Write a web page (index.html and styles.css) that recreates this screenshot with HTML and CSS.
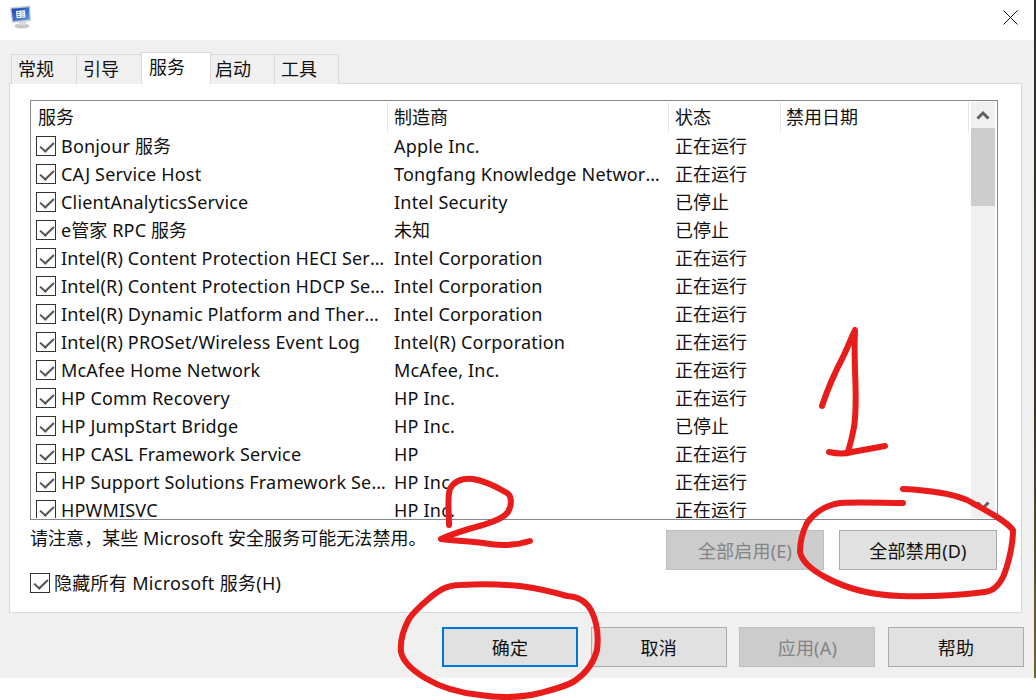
FILE: index.html
```html
<!DOCTYPE html>
<html lang="zh-CN">
<head>
<meta charset="utf-8">
<title>系统配置</title>
<link rel="stylesheet" href="styles.css">
</head>
<body>
<div class="screen">
  <main class="window">
    <header class="titlebar">
      <svg class="app-icon" width="24" height="24" viewBox="0 0 24 24">
        <defs>
          <linearGradient id="scr" x1="0" y1="0" x2="1" y2="1"><stop offset="0" stop-color="#1c3fb0"/><stop offset="1" stop-color="#5f9be8"/></linearGradient>
        </defs>
        <ellipse cx="13" cy="21" rx="7.5" ry="2.5" fill="#c4c8c8"/>
        <rect x="10" y="16" width="7" height="4" fill="#dcdfdf"/>
        <path d="M1 2.5 21 0.5 22 16 3 18Z" fill="#c9ced4"/>
        <path d="M2.5 3.8 20 2.2 20.6 14.6 4 16.2Z" fill="url(#scr)"/>
        <path d="M7 6 16 5.2 16.4 12.5 7.6 13.2Z" fill="#eef3fa"/>
        <path d="M8.5 7.5h2M8.5 9.5h2M8.700 11.5h2" stroke="#3a64c4" stroke-width="1"/>
        <path d="M12 7.2h3M12 9.2h3M12 11.2h3" stroke="#9fb4d8" stroke-width="1"/>
      </svg>
      <svg class="close-icon" width="15" height="15" viewBox="0 0 15 15"><path d="M.5.5l14 14M14.500.5l-14 14" stroke="#111" stroke-width="1" fill="none"/></svg>
    </header>
    <div class="client">
      <nav class="tabs">
        <span class="tab tab-a">常规</span>
        <span class="tab tab-a">引导</span>
        <span class="tab tab-selected">服务</span>
        <span class="tab tab-b">启动</span>
        <span class="tab tab-c">工具</span>
      </nav>
      <section class="panel">
        <div class="list">
          <div class="list-main">
            <div class="row head">
              <div class="cell c1 h">服务</div><div class="cell c2 h">制造商</div><div class="cell c3 h">状态</div><div class="cell c4 h">禁用日期</div>
            </div>
            <div class="row"><div class="cell c1"><i class="check"></i><span class="name">Bonjour <span class="cjk">服务</span></span></div><div class="cell c2">Apple Inc.</div><div class="cell c3">正在运行</div></div>
            <div class="row"><div class="cell c1"><i class="check"></i><span class="name">CAJ Service Host</span></div><div class="cell c2">Tongfang Knowledge Network Technology</div><div class="cell c3">正在运行</div></div>
            <div class="row"><div class="cell c1"><i class="check"></i><span class="name">ClientAnalyticsService</span></div><div class="cell c2">Intel Security</div><div class="cell c3">已停止</div></div>
            <div class="row"><div class="cell c1"><i class="check"></i><span class="name">e<span class="cjk">管家</span> RPC <span class="cjk">服务</span></span></div><div class="cell c2"><span class="cjk">未知</span></div><div class="cell c3">已停止</div></div>
            <div class="row"><div class="cell c1"><i class="check"></i><span class="name">Intel(R) Content Protection HECI Service</span></div><div class="cell c2">Intel Corporation</div><div class="cell c3">正在运行</div></div>
            <div class="row"><div class="cell c1"><i class="check"></i><span class="name">Intel(R) Content Protection HDCP Service</span></div><div class="cell c2">Intel Corporation</div><div class="cell c3">正在运行</div></div>
            <div class="row"><div class="cell c1"><i class="check"></i><span class="name">Intel(R) Dynamic Platform and Thermal Framework</span></div><div class="cell c2">Intel Corporation</div><div class="cell c3">正在运行</div></div>
            <div class="row"><div class="cell c1"><i class="check"></i><span class="name">Intel(R) PROSet/Wireless Event Log</span></div><div class="cell c2">Intel(R) Corporation</div><div class="cell c3">正在运行</div></div>
            <div class="row"><div class="cell c1"><i class="check"></i><span class="name">McAfee Home Network</span></div><div class="cell c2">McAfee, Inc.</div><div class="cell c3">正在运行</div></div>
            <div class="row"><div class="cell c1"><i class="check"></i><span class="name">HP Comm Recovery</span></div><div class="cell c2">HP Inc.</div><div class="cell c3">正在运行</div></div>
            <div class="row"><div class="cell c1"><i class="check"></i><span class="name">HP JumpStart Bridge</span></div><div class="cell c2">HP Inc.</div><div class="cell c3">已停止</div></div>
            <div class="row"><div class="cell c1"><i class="check"></i><span class="name">HP CASL Framework Service</span></div><div class="cell c2">HP</div><div class="cell c3">正在运行</div></div>
            <div class="row"><div class="cell c1"><i class="check"></i><span class="name">HP Support Solutions Framework Service</span></div><div class="cell c2">HP Inc.</div><div class="cell c3">正在运行</div></div>
            <div class="row"><div class="cell c1"><i class="check"></i><span class="name">HPWMISVC</span></div><div class="cell c2">HP Inc.</div><div class="cell c3">正在运行</div></div>
          </div>
          <div class="scrollbar">
            <svg class="arrow" width="24" height="26" viewBox="0 0 24 26"><path d="M6.500 16.500 12 11l5.500 5.500" stroke="#606060" stroke-width="3" fill="none"/></svg>
            <div class="thumb"></div>
            <svg class="arrow arrow-down" width="24" height="14" viewBox="0 0 24 14"><path d="M6.500 1.500 12 7l5.500-5.500" stroke="#606060" stroke-width="3" fill="none"/></svg>
          </div>
        </div>
        <div class="notice-row">
          <p class="notice">请注意，某些 Microsoft 安全服务可能无法禁用。</p>
          <div class="notice-buttons">
            <button class="btn btn-wide" disabled>全部启用(E)</button>
            <button class="btn btn-wide">全部禁用(D)</button>
          </div>
        </div>
        <label class="hide-row"><i class="check"></i><span>隐藏所有 Microsoft 服务(H)</span></label>
      </section>
      <footer class="footer">
        <button class="btn btn-default">确定</button>
        <button class="btn">取消</button>
        <button class="btn" disabled>应用(A)</button>
        <button class="btn">帮助</button>
      </footer>
    </div>
  </main>
  <div class="edge"></div>
</div>
<svg class="ink" width="1036" height="700" viewBox="0 0 1036 700">
  <g fill="none" stroke="#e91c1c" stroke-width="6" stroke-linecap="round" stroke-linejoin="round">
    <path d="M822 406C828 388 835 372 843 357C848 347 851 338 855 330C854 350 855 370 855.500 385C856 405 856 420 853 432C851 442 849 448 848 452"/>
    <path d="M829 452C838 454 845 454 852 452L885 446"/>
    <path d="M903 503C885 503 860 502 840 503C826 505 814 513 807 523C802 533 800 545 800 552C802 562 812 570 825 577C845 588 870 595 900 596C925 597 960 595 985 592C994 591 999 585 1003 577C1008 566 1013 545 1013 530C1005 520 985 510 967 500C950 493 925 490 903 489"/>
    <path d="M449 525C449 510 447 498 450 489C454 481 462 478 473 479C485 481 497 487 507 493C512 496 512 505 508 512C503 519 492 522 483 525C468 529 452 534 441 539C455 541 470 541 483 543C500 546 515 546 530 541"/>
    <path d="M567 596C550 591 535 588 520 586C500 584 480 584 460 585C447 585 440 590 432 596C424 603 415 610 409 619C403 630 400 642 401 652C403 662 412 670 425 678C440 687 460 693 480 695C500 698 520 698 540 693C555 689 568 686 576 680C587 672 594 662 597 650C599 635 596 620 591 610C586 602 580 597 567 596"/>
  </g>
</svg>
</body>
</html>
```
FILE: styles.css
```css
* { box-sizing: border-box; }
html, body { margin: 0; padding: 0; background: #fff; }
body {
  width: 1036px;
  height: 700px;
  overflow: hidden;
  position: relative;
  font-family: "Noto Sans", "Noto Sans CJK SC", sans-serif;
  font-size: 18px;
  color: #111;
}
.screen { display: flex; height: 678px; }
.window { width: 1034px; display: flex; flex-direction: column; }
.edge { width: 2px; background: linear-gradient(#2e2e2e, #3a3428 60%, #6e6436); }

.titlebar {
  height: 40px;
  background: #fff;
  display: flex;
  align-items: flex-start;
  justify-content: space-between;
  padding: 5px 16px 0 9px;
}
.close-icon { margin-top: 5px; }

.client { flex: 1; background: #f0f0f0; display: flex; flex-direction: column; }

.tabs { display: flex; align-items: flex-end; height: 44px; margin: 0 0 -1px 11px; }
.tab {
  position: relative;
  height: 30px;
  padding: 0 0 0 6px;
  line-height: 29px;
  background: #f0f0f0;
  border: 1px solid #d9d9d9;
  border-bottom: 0;
  border-right: 0;
}
.tab-a { width: 65px; }
.tab-b { width: 63px; border-left: 0; padding-left: 4px; }
.tab-c { width: 65px; border-right: 1px solid #d9d9d9; }
.tab-selected {
  z-index: 1;
  width: 70px;
  height: 32px;
  padding-left: 7px;
  line-height: 28px;
  background: #fff;
  border-right: 1px solid #d9d9d9;
}

.panel {
  height: 530px;
  margin: 0 12px 0 9px;
  padding: 16px 23px 0 20px;
  background: #fff;
  border: 1px solid #d9d9d9;
  display: flex;
  flex-direction: column;
}

.list {
  height: 420px;
  border: 1px solid #828790;
  padding: 1px 2px 1px 0;
  display: flex;
  background: #fff;
  overflow: hidden;
}
.list-main { flex: 1; min-width: 0; overflow: hidden; }
.row { display: flex; height: 28px; line-height: 28px; white-space: nowrap; }
.row.head { height: 30px; line-height: 30px; }
.cell { flex: none; overflow: hidden; text-overflow: ellipsis; }
.c1 { width: 357px; display: flex; align-items: center; padding: 0 1px 0 5px; }
.c2 { width: 281px; padding: 0 8px 0 6px; letter-spacing: .2px; }
.c3 { width: 112px; padding-left: 6px; }
.c4 { width: 188px; padding-left: 5px; }
.h { border-right: 1px solid #e5e5e5; height: 30px; letter-spacing: 0; }
.c1.h { display: block; padding-left: 7px; }
.name { flex: 1; min-width: 0; overflow: hidden; text-overflow: ellipsis; margin-left: 5px; letter-spacing: .18px; }
.cjk { letter-spacing: 0; }

.check {
  flex: none;
  display: block;
  position: relative;
  width: 20px;
  height: 20px;
  border: 1px solid #333;
  background: #fff;
}
.check::after {
  content: "";
  position: absolute;
  left: 6px;
  top: 1.500px;
  width: 6px;
  height: 11px;
  border: solid #555;
  border-width: 0 2px 2px 0;
  transform: rotate(42deg) skewX(-4deg);
}

.scrollbar { width: 24px; flex: none; background: #f0f0f0; display: flex; flex-direction: column; }
.arrow { display: block; flex: none; }
.thumb { height: 78px; background: #cdcdcd; flex: none; }
.arrow-down { margin-top: auto; margin-bottom: 3px; }

.notice-row { display: flex; justify-content: space-between; align-items: flex-start; margin-top: 10px; }
.notice { margin: -2px 0 0; line-height: 20px; letter-spacing: .05px; }
.notice-buttons { display: flex; gap: 15px; margin-right: 1px; }

.btn {
  width: 136px;
  height: 40px;
  padding: 0;
  font: inherit;
  letter-spacing: .2px;
  color: #111;
  background: #e1e1e1;
  border: 1px solid #adadad;
  border-radius: 0;
}
.btn:disabled { background: #cccccc; border-color: #bfbfbf; color: #838383; }
.btn-wide { width: 158px; }
.btn-default { border: 2px solid #0078d7; }

.hide-row { display: flex; align-items: center; margin-top: 3px; height: 20px; line-height: 20px; }
.hide-row span { margin-left: 4px; letter-spacing: .3px; }

.footer { flex: 1; display: flex; justify-content: flex-end; gap: 12.670px; padding: 14px 10px 0 0; }

.ink { position: absolute; left: 0; top: 0; pointer-events: none; }
```
